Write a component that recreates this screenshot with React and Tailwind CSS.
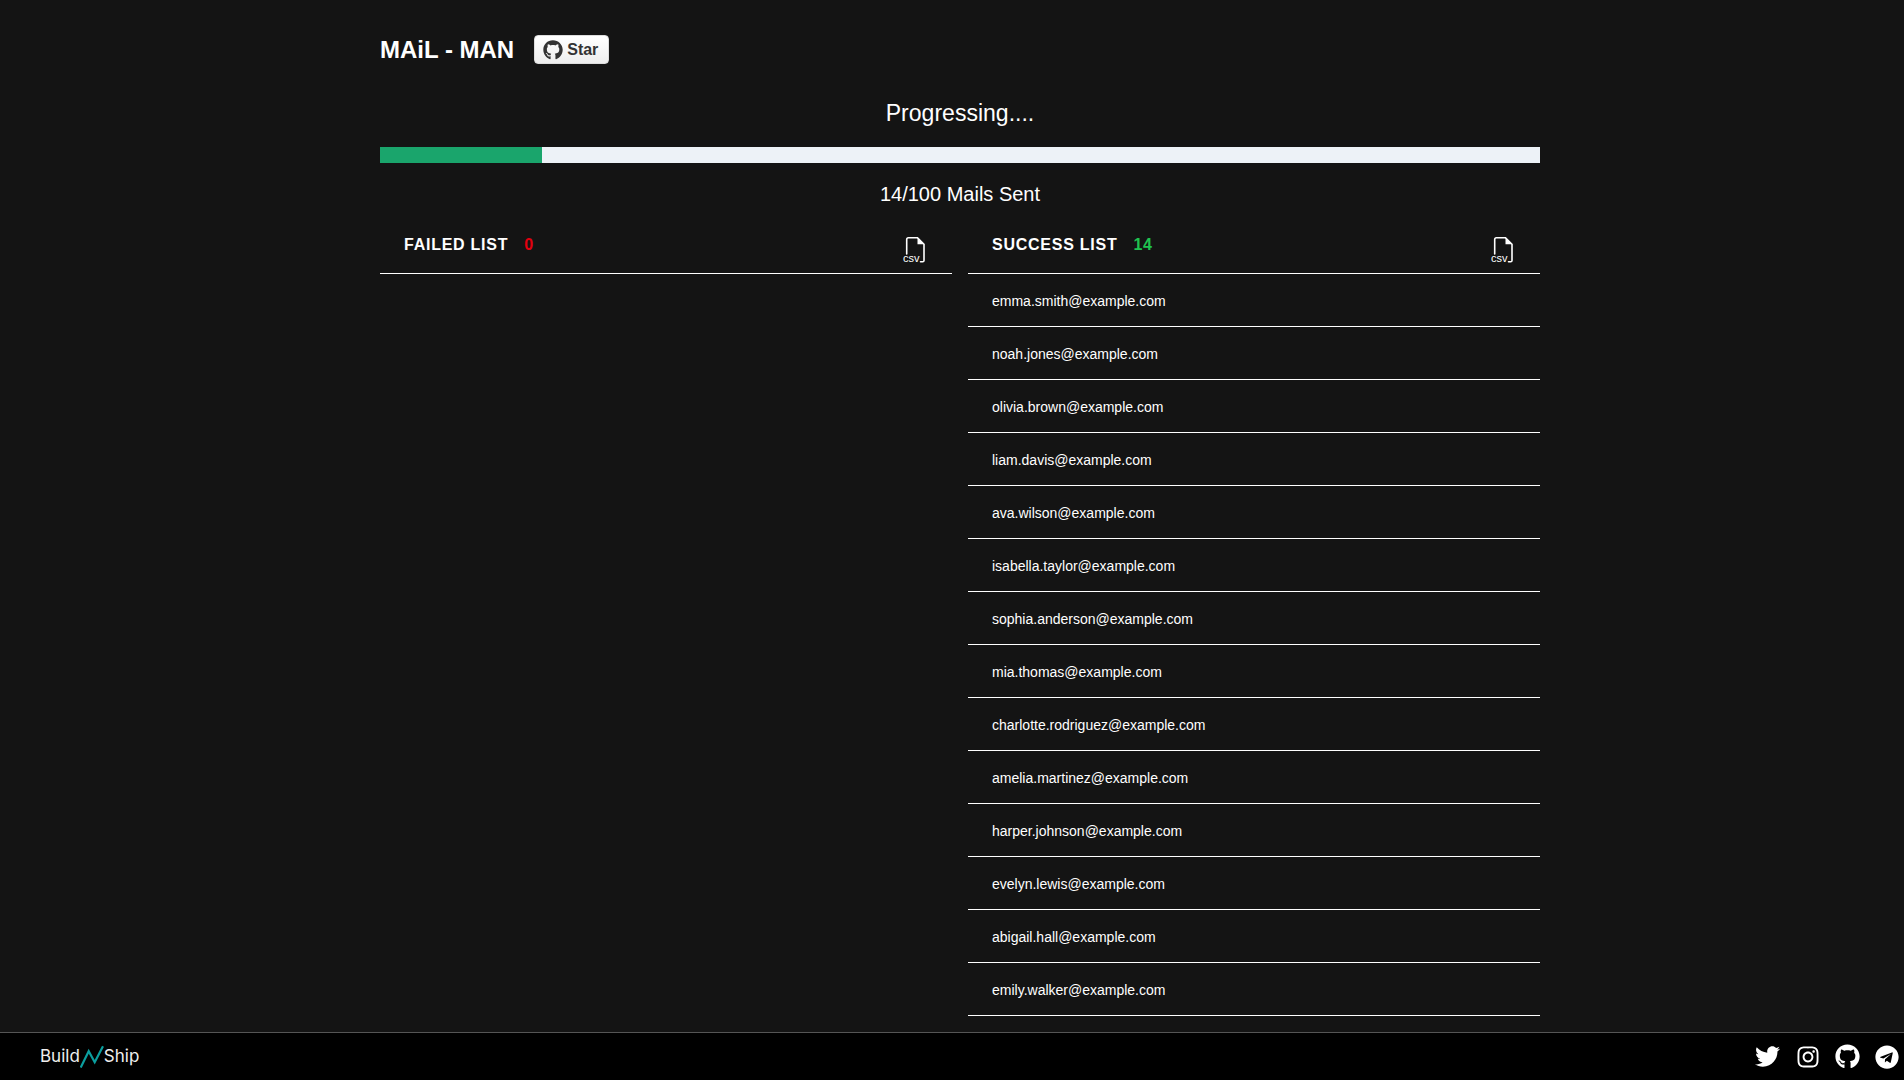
import React from 'react'
import { FaTwitter, FaInstagram, FaGithub, FaTelegram } from 'react-icons/fa'

const emails = [
  'emma.smith@example.com',
  'noah.jones@example.com',
  'olivia.brown@example.com',
  'liam.davis@example.com',
  'ava.wilson@example.com',
  'isabella.taylor@example.com',
  'sophia.anderson@example.com',
  'mia.thomas@example.com',
  'charlotte.rodriguez@example.com',
  'amelia.martinez@example.com',
  'harper.johnson@example.com',
  'evelyn.lewis@example.com',
  'abigail.hall@example.com',
  'emily.walker@example.com',
]

const CsvIcon = () => (
  <div className="relative w-[22px] h-[26px] mt-[17px]">
    <svg width="22" height="26" viewBox="0 0 22 26" fill="none" className="absolute left-0 top-0">
      <path d="M3.7 17V2.5C3.7 1.4 4.4 0.8 5.4 0.8H14.5L21 7.3V23.5C21 24.3 20.5 24.8 19.7 24.8H17.5" stroke="#fff" strokeWidth="1.6" strokeLinecap="round" />
      <path d="M14.5 0.8V7.3H21Z" fill="#fff" />
    </svg>
    <span className="absolute left-0 bottom-0 text-[11px] leading-[10px] text-white">csv</span>
  </div>
)

const ListColumn = ({ title, count, countClass, items }) => (
  <div>
    <div className="h-[54px] pl-6 pr-[27px] flex justify-between border-b border-white">
      <div className="pt-[13px] text-base leading-6 font-bold tracking-[0.75px] text-white">
        {title}
        <span className={`ml-4 ${countClass}`}>{count}</span>
      </div>
      <CsvIcon />
    </div>
    {items.map((email) => (
      <div key={email} className="h-[53px] pl-6 pt-px flex items-center border-b border-white text-sm text-white">
        {email}
      </div>
    ))}
  </div>
)

const App = () => {
  return (
    <div className="h-screen flex flex-col bg-[#141414] font-['Liberation_Sans',Arial,sans-serif] overflow-hidden">
      <main className="flex-1 min-h-0 w-[1160px] ml-[380px]">
        <div className="flex items-center gap-5 pt-[35px] h-[64px]">
          <h1 className="text-2xl font-bold text-white">MAiL - MAN</h1>
          <div className="h-[29px] w-[75px] flex items-center gap-1 pl-2 rounded border border-[#dddddd] bg-gradient-to-b from-white to-[#eeeeee] text-[#333] text-base font-bold">
            <FaGithub size={20} />
            Star
          </div>
        </div>
        <div className="mt-[33px] text-center text-[23.04px] leading-[32px] text-white">Progressing....</div>
        <div className="mt-[18px] h-4 bg-[#edf2f7]">
          <div className="h-full bg-[#1aa56c]" style={{ width: '14%' }} />
        </div>
        <div className="mt-[18px] text-center text-xl leading-[26px] text-white">14/100 Mails Sent</div>
        <div className="mt-[13px] grid grid-cols-2 gap-4">
          <ListColumn title="FAILED LIST" count="0" countClass="text-[#e3000f]" items={[]} />
          <ListColumn title="SUCCESS LIST" count="14" countClass="text-[#1fc24f]" items={emails} />
        </div>
      </main>
      <footer className="h-[48px] shrink-0 bg-black border-t border-[#555] flex items-center justify-between pl-10 pr-[5px]">
        <div className="flex items-center text-[#eeeeee] text-[17px] font-['Inter',sans-serif]">
          <span>Build</span>
          <svg width="24" height="24" viewBox="0 0 24 24" fill="none">
            <path d="M0.7 22.5L8.7 6.2L14.7 17.2L23 1.2" stroke="#0b9e9e" strokeWidth="2.2" />
          </svg>
          <span>Ship</span>
        </div>
        <div className="flex items-center gap-[15px] text-white">
          <FaTwitter size={25} className="mr-px" />
          <FaInstagram size={24} />
          <FaGithub size={25} />
          <FaTelegram size={24} />
        </div>
      </footer>
    </div>
  )
}

export default App
